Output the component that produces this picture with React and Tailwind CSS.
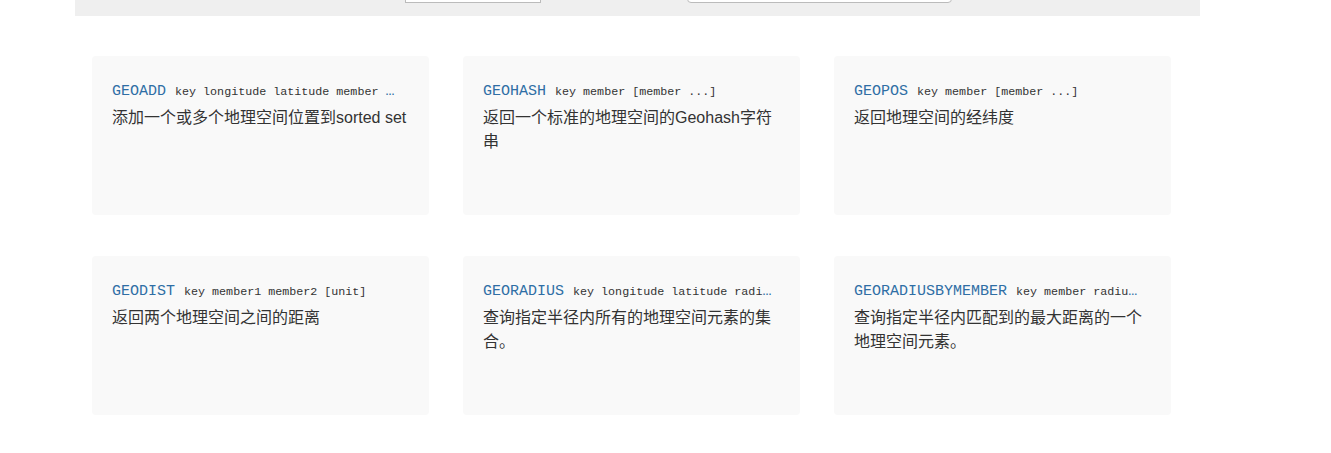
const commands = [
  { name: 'GEOADD', args: 'key longitude latitude member [longitude latitude member ...]', desc: '添加一个或多个地理空间位置到sorted set' },
  { name: 'GEOHASH', args: 'key member [member ...]', desc: '返回一个标准的地理空间的Geohash字符串' },
  { name: 'GEOPOS', args: 'key member [member ...]', desc: '返回地理空间的经纬度' },
  { name: 'GEODIST', args: 'key member1 member2 [unit]', desc: '返回两个地理空间之间的距离' },
  { name: 'GEORADIUS', args: 'key longitude latitude radius m|km|ft|mi [WITHCOORD] [WITHDIST] [WITHHASH] [COUNT count]', desc: '查询指定半径内所有的地理空间元素的集合。' },
  { name: 'GEORADIUSBYMEMBER', args: 'key member radius m|km|ft|mi [WITHCOORD] [WITHDIST] [WITHHASH] [COUNT count]', desc: '查询指定半径内匹配到的最大距离的一个地理空间元素。' },
];

const CommandCard = ({ name, args, desc }) => (
  <div className="h-[159px] rounded-[4px] bg-[#f9f9f9] px-[20px] pt-[24px]">
    <div className="mr-[8px] h-[24px] overflow-hidden text-ellipsis whitespace-nowrap text-[15px] leading-[24px] text-[#2f6ea5] font-['Liberation_Mono',monospace]">
      {name} <span className="text-[11.7px] text-[#333]">{args}</span>
    </div>
    <p className="mt-[2px] text-[16px] leading-[24px] text-[#333] font-['Liberation_Sans','Noto_Sans_CJK_SC',sans-serif]">
      {desc}
    </p>
  </div>
);

export default function App() {
  return (
    <div className="min-h-screen bg-white">
      <div className="ml-[75px] flex h-[16px] w-[1125px] bg-[#efefef]">
        <div className="ml-[330px] -mt-[28px] h-[31px] w-[136px] border border-[#bbb] bg-white" />
        <div className="ml-[146px] -mt-[28px] h-[31px] w-[265px] rounded-b-[4px] border border-[#bbb] bg-white" />
      </div>
      <div className="mt-[40px] ml-[75px] grid w-[1113px] grid-cols-3 gap-x-[34px] gap-y-[41px] px-[17px]">
        {commands.map((c) => (
          <CommandCard key={c.name} {...c} />
        ))}
      </div>
    </div>
  );
}
